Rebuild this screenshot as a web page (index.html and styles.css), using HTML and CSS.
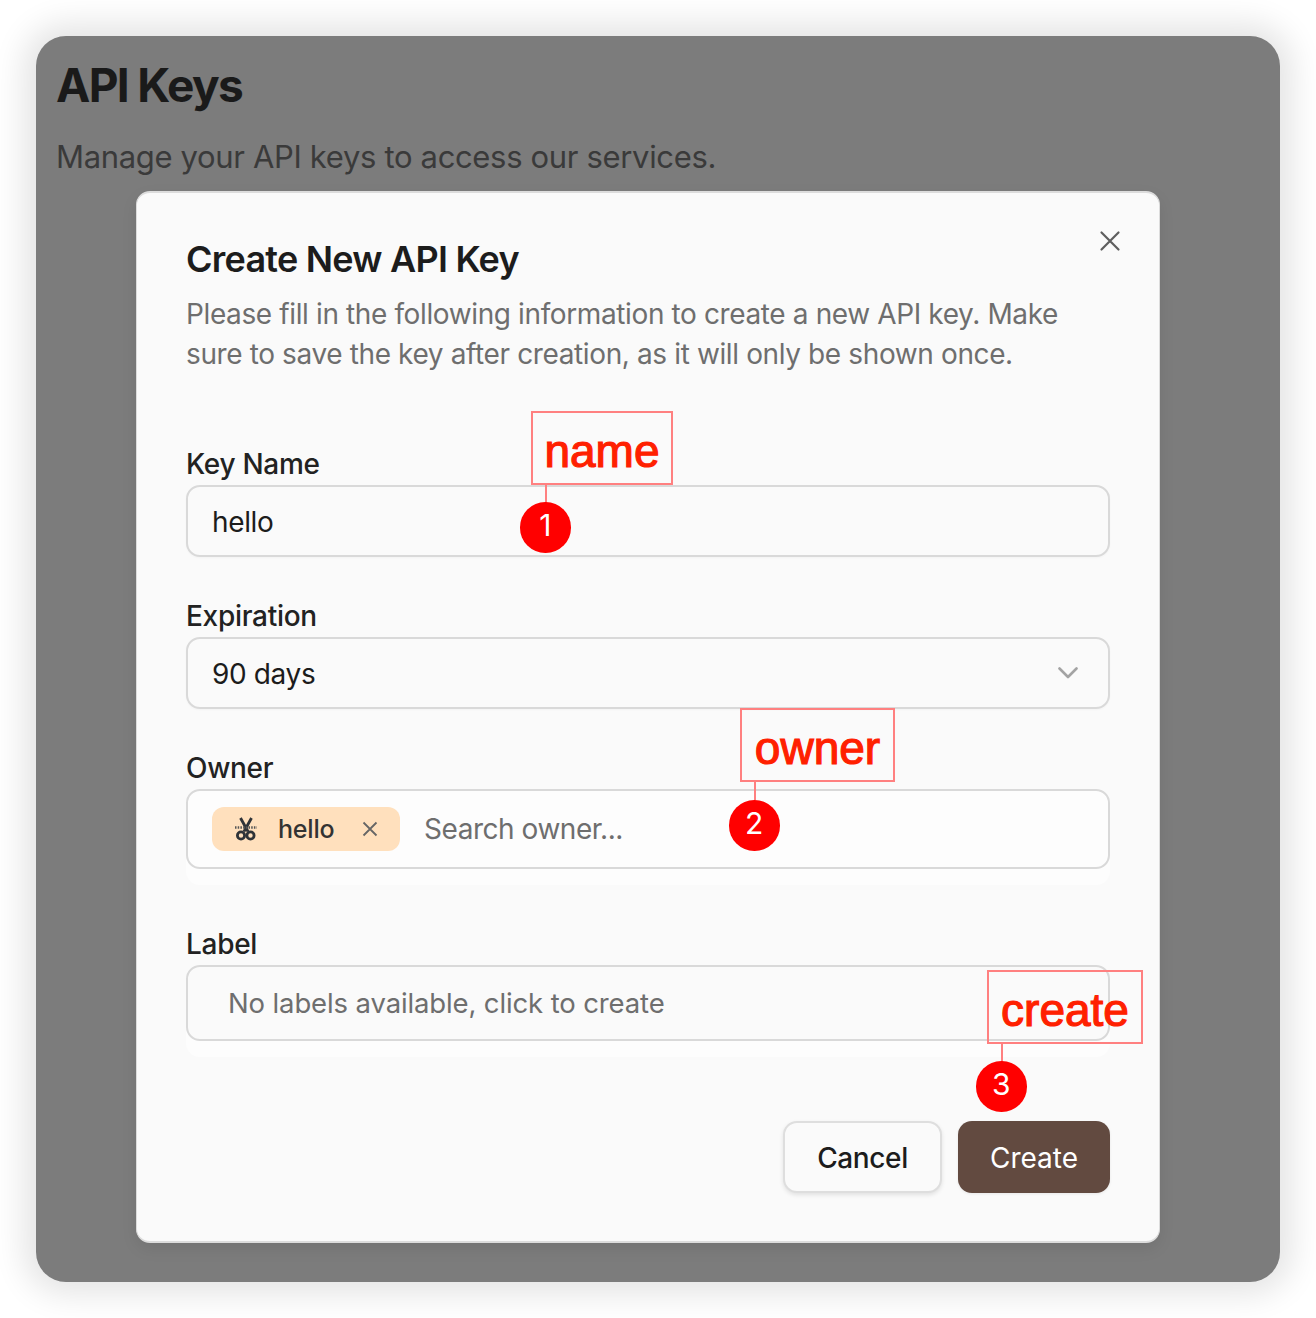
FILE: index.html
```html
<!DOCTYPE html>
<html lang="en">
<head>
<meta charset="utf-8">
<title>API Keys</title>
<link rel="stylesheet" href="styles.css">
</head>
<body>
<div class="window">
  <h1 class="page-title">API Keys</h1>
  <p class="page-sub">Manage your API keys to access our services.</p>
  <section class="modal">
    <button class="close" aria-label="Close">
      <svg width="24" height="24" viewBox="0 0 24 24"><path d="M3.500 3.500L20.500 20.500M20.500 3.500L3.500 20.500"/></svg>
    </button>
    <h2 class="modal-title">Create New API Key</h2>
    <p class="modal-desc">Please fill in the following information to create a new API key. Make sure to save the key after creation, as it will only be shown once.</p>
    <div class="form">
      <div class="field">
        <label class="label">Key Name</label>
        <div class="input input-plain">hello</div>
      </div>
      <div class="field">
        <label class="label">Expiration</label>
        <div class="input input-plain select">
          <span>90 days</span>
          <svg class="chev" width="20" height="12" viewBox="0 0 20 12"><path d="M1.500 1.500L10 10L18.500 1.500"/></svg>
        </div>
      </div>
      <div class="field">
        <label class="label">Owner</label>
        <div class="wrap">
          <div class="input input-owner">
            <span class="chip">
              <svg class="scissors" width="22" height="24" viewBox="0 0 22 24">
                <path class="blade" d="M5.500 1L13 14.500M16.500 1L9 14.500"/>
                <path class="teeth" d="M0 10.500H22"/>
                <circle class="ring" cx="6" cy="18.500" r="3.600"/>
                <circle class="ring" cx="15.500" cy="18.500" r="3.600"/>
              </svg>
              <span class="chip-text">hello</span>
              <svg class="chip-x" width="16" height="16" viewBox="0 0 16 16"><path d="M1.500 1.500L14.500 14.500M14.500 1.500L1.500 14.500"/></svg>
            </span>
            <span class="placeholder">Search owner...</span>
          </div>
        </div>
      </div>
      <div class="field">
        <label class="label">Label</label>
        <div class="wrap">
          <div class="input input-label">No labels available, click to create</div>
        </div>
      </div>
    </div>
    <div class="actions">
      <button class="btn btn-cancel">Cancel</button>
      <button class="btn btn-create">Create</button>
    </div>
    <div class="note note-name">name</div>
    <div class="tick tick-name"></div>
    <div class="pin pin-name">1</div>
    <div class="note note-owner">owner</div>
    <div class="tick tick-owner"></div>
    <div class="pin pin-owner">2</div>
    <div class="note note-create">create</div>
    <div class="tick tick-create"></div>
    <div class="pin pin-create">3</div>
  </section>
</div>
</body>
</html>
```
FILE: styles.css
```css
* { box-sizing: border-box; }
html, body { margin: 0; background: #fff; }
body { padding: 36px; font-family: Inter, "Liberation Sans", sans-serif; }
.window {
  width: 1244px;
  height: 1246px;
  padding: 19px 20px 0;
  background: #7c7c7c;
  border-radius: 30px;
  box-shadow: 0 0 32px 12px rgba(0,0,0,.11);
}
.page-title {
  margin: 0;
  font-size: 46px;
  line-height: 60px;
  font-weight: 700;
  letter-spacing: -1.650px;
  color: #1a1a1a;
}
.page-sub {
  margin: 22px 0 0;
  font-size: 31px;
  line-height: 40px;
  letter-spacing: -.340px;
  color: #3a3a3a;
}
.modal {
  position: relative;
  width: 1024px;
  height: 1052px;
  margin: 14px 0 0 80px;
  padding: 45px 49px 50px;
  background: #fafafa;
  border-radius: 14px;
  border: 1px solid #dcdcdc;
  border-top-width: 2px;
  border-bottom-width: 2px;
  box-shadow: 0 6px 16px rgba(0,0,0,.08);
}
.close {
  position: absolute;
  top: 36px;
  right: 37px;
  width: 24px;
  height: 24px;
  padding: 0;
  border: 0;
  background: none;
}
.close svg { display: block; }
.close path { stroke: #5e5e5e; stroke-width: 2.200; fill: none; stroke-linecap: round; }
.modal-title {
  margin: 0;
  font-size: 36px;
  line-height: 43px;
  font-weight: 600;
  letter-spacing: -.760px;
  color: #1c1c1c;
}
.modal-desc {
  margin: 13px 0 0;
  font-size: 28px;
  line-height: 40px;
  letter-spacing: -.380px;
  color: #6e6e6e;
}
.form { margin-top: 69px; display: flex; flex-direction: column; gap: 38px; }
.field { display: flex; flex-direction: column; }
.label {
  font-size: 28px;
  line-height: 42px;
  font-weight: 500;
  letter-spacing: -.300px;
  color: #222;
}
.input {
  border: 2px solid #d9d9d9;
  border-radius: 14px;
  font-size: 28px;
  letter-spacing: -.370px;
  color: #1c1c1c;
  display: flex;
  align-items: center;
}
.input-plain { height: 72px; padding: 2px 24px 0; background: #fafafa; box-shadow: 0 1px 2px rgba(0,0,0,.03); }
.select { justify-content: space-between; }
.chev { margin-right: 6px; margin-bottom: 2px; }
.chev path { stroke: #a3a3a3; stroke-width: 2.600; fill: none; stroke-linecap: round; stroke-linejoin: round; }
.wrap { padding-bottom: 16px; background: #fdfdfd; border-radius: 14px; }
.input-owner { height: 80px; padding: 0 24px; background: #fdfdfd; gap: 24px; }
.chip {
  display: flex;
  flex: none;
  align-items: center;
  width: 188px;
  height: 44px;
  padding: 0 22px 0 23px;
  background: #ffe0bd;
  border-radius: 12px;
}
.chip-text { margin-left: 21px; font-size: 25px; font-weight: 500; letter-spacing: -.200px; color: #333; }
.chip-x { margin-left: auto; flex: none; }
.chip-x path { stroke: #666; stroke-width: 1.800; fill: none; }
.scissors { flex: none; }
.blade { stroke: #2f3338; stroke-width: 2.800; fill: none; }
.teeth { stroke: #555; stroke-width: 2.500; stroke-dasharray: 1.500 1.200; fill: none; }
.ring { stroke: #2f3338; stroke-width: 2.800; fill: none; }
.placeholder { color: #6e6e6e; letter-spacing: -.460px; }
.input-label { height: 76px; padding: 0 40px; background: #fafafa; color: #6e6e6e; font-size: 27.500px; letter-spacing: -.130px; }
.actions { margin-top: 64px; display: flex; justify-content: flex-end; gap: 16px; }
.btn {
  height: 72px;
  padding: 2px 0 0;
  border-radius: 14px;
  font: 500 28px/1 Inter, "Liberation Sans", sans-serif;
}
.btn-cancel {
  width: 159px;
  background: #fafafa;
  border: 2px solid #dedede;
  color: #1c1c1c;
  letter-spacing: -.370px;
  box-shadow: 0 2px 4px rgba(0,0,0,.1);
}
.btn-create {
  width: 152px;
  background: #624a40;
  border: 0;
  color: #fff;
  font-weight: 400;
  box-shadow: 0 1px 3px rgba(0,0,0,.08);
}
.note {
  position: absolute;
  height: 74px;
  padding-top: 6px;
  border: 2px solid #ff8080;
  display: flex;
  align-items: center;
  justify-content: center;
  font-family: "Liberation Sans", Arial, sans-serif;
  font-size: 46px;
  color: #ff2000;
  -webkit-text-stroke: 1.200px #ff2000;
}
.tick { position: absolute; width: 2px; height: 18px; background: #ff8080; }
.pin {
  position: absolute;
  width: 50.500px;
  height: 50.500px;
  border-radius: 50%;
  background: #ff0000;
  color: #fff;
  font-size: 30px;
  line-height: 47px;
  text-align: center;
}
.note-name { left: 394px; top: 218px; width: 142px; }
.tick-name { left: 408px; top: 292px; }
.pin-name { left: 383px; top: 309px; }
.note-owner { left: 603px; top: 515px; width: 155px; }
.tick-owner { left: 617px; top: 589px; }
.pin-owner { left: 592px; top: 607px; }
.note-create { left: 850px; top: 777px; width: 156px; }
.tick-create { left: 864px; top: 851px; }
.pin-create { left: 839px; top: 868px; }
```
